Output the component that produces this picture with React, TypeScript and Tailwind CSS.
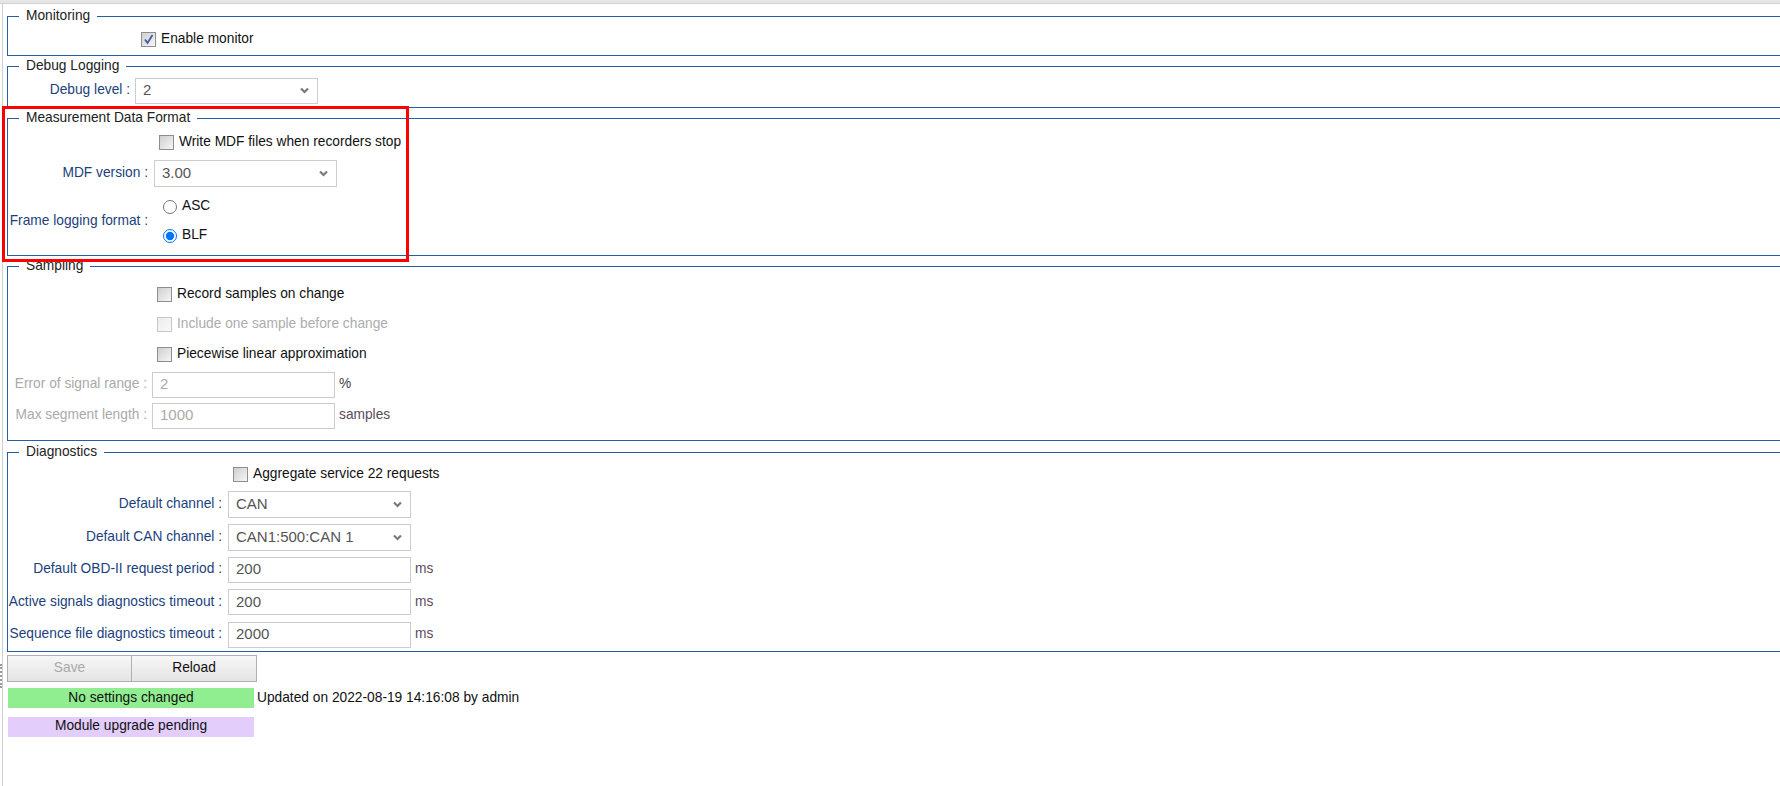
import React from 'react'

const Chevron = () => (
  <svg width="9" height="7" viewBox="0 0 9 7" className="shrink-0">
    <path d="M1 1.5 L4.5 5 L8 1.5" fill="none" stroke="#7a7a7a" strokeWidth="2.2" />
  </svg>
)

const Check = ({ checked = false, disabled = false }: any) => (
  <span
    className={
      'w-[15px] h-[15px] shrink-0 flex items-center justify-center border ' +
      (disabled ? 'border-[#c8c8c8] bg-linear-to-br from-[#ececec] to-[#fafafa]' : 'border-[#8e8e8e] bg-linear-to-br from-[#cfcfcf] to-[#f6f6f6]')
    }
  >
    {checked && (
      <svg width="11" height="11" viewBox="0 0 11 11">
        <path d="M2 5.5 L4.5 9 L9.5 1" fill="none" stroke="#3a5da8" strokeWidth="1.8" />
      </svg>
    )}
  </span>
)

const CheckRow = ({ text, checked, disabled, className }: any) => (
  <div className={'flex items-center gap-[5px] ' + className}>
    <Check checked={checked} disabled={disabled} />
    <span className={'text-[13.75px] ' + (disabled ? 'text-[#adadad]' : 'text-[#111]')}>{text}</span>
  </div>
)

const Select = ({ value, className = '' }: any) => (
  <div className={'w-[183px] h-[26px] flex items-center justify-between border border-[#cccccc] bg-white pl-[7px] pr-[8px] text-[15px] text-[#555] ' + className}>
    <span>{value}</span>
    <Chevron />
  </div>
)

const Input = ({ value, disabled = false }: any) => (
  <div className={'w-[183px] h-[26px] flex items-center border border-[#cccccc] bg-white pl-[7px] text-[15px] ' + (disabled ? 'text-[#aaa]' : 'text-[#555]')}>
    {value}
  </div>
)

const Box = ({ title, className = '', children }: any) => (
  <fieldset className={'border border-[#2160a6] w-[1800px] min-w-0 ' + className}>
    <legend className="ml-[11px] px-[7px] text-[13.75px] leading-[16px] text-[#222]">{title}</legend>
    {children}
  </fieldset>
)

const lbl = 'text-[13.75px] text-[#1b3f7d] text-right whitespace-nowrap'
const unit = 'text-[13.75px] text-[#5b4b5b] ml-[4px]'

export default function App() {
  return (
    <div className="relative w-screen h-screen overflow-hidden bg-white font-['Liberation_Sans',Arial,sans-serif]">
      <div className="h-[4px] bg-[#e6e6e6] border-b border-[#d2d2d2]" />
      <div className="flex h-full">
        <div className="w-[2px] shrink-0" />
        <div className="w-px shrink-0 bg-[#cfcfcf]" />
        <div className="flex-1 min-w-0 pl-[4px]">
          <Box title="Monitoring" className="mt-[4px]">
            <div className="h-[31px] flex items-center pl-[133px]">
              <CheckRow text="Enable monitor" checked />
            </div>
          </Box>

          <Box title="Debug Logging" className="mt-[2px]">
            <div className="h-[33px] flex items-center">
              <div className={lbl + ' w-[127px] pr-[5px]'}>Debug level :</div>
              <Select value="2" />
            </div>
          </Box>

          <Box title="Measurement Data Format" className="mt-[2px]">
            <div className="h-[33px] flex items-center pl-[151px]">
              <CheckRow text="Write MDF files when recorders stop" />
            </div>
            <div className="h-[28px] flex items-center">
              <div className={lbl + ' w-[146px] pr-[6px]'}>MDF version :</div>
              <Select value="3.00" className="h-[27px]" />
            </div>
            <div className="h-[68px] flex items-center">
              <div className={lbl + ' w-[146px] pr-[6px]'}>Frame logging format :</div>
              <div className="flex flex-col py-[5px] pl-[9px]">
                <label className="h-[29px] flex items-center gap-[5px] text-[13.75px] text-[#111]">
                  <input type="radio" name="fmt" className="m-0 w-[14px] h-[14px]" />
                  ASC
                </label>
                <label className="h-[29px] flex items-center gap-[5px] text-[13.75px] text-[#111]">
                  <input type="radio" name="fmt" defaultChecked className="m-0 w-[14px] h-[14px]" />
                  BLF
                </label>
              </div>
            </div>
          </Box>

          <Box title="Sampling" className="mt-[2px]">
            <div className="pt-[5px] pb-[9px]">
              <div className="h-[30px] flex items-center pl-[149px]">
                <CheckRow text="Record samples on change" />
              </div>
              <div className="h-[30px] flex items-center pl-[149px]">
                <CheckRow text="Include one sample before change" disabled />
              </div>
              <div className="h-[30px] flex items-center pl-[149px]">
                <CheckRow text="Piecewise linear approximation" />
              </div>
              <div className="h-[31px] flex items-center">
                <div className={lbl + ' w-[144px] pr-[5px] !text-[#aaa]'}>Error of signal range :</div>
                <Input value="2" disabled />
                <span className="text-[13.75px] text-[#444] ml-[4px]">%</span>
              </div>
              <div className="h-[31px] flex items-center">
                <div className={lbl + ' w-[144px] pr-[5px] !text-[#aaa]'}>Max segment length :</div>
                <Input value="1000" disabled />
                <span className={unit}>samples</span>
              </div>
            </div>
          </Box>

          <Box title="Diagnostics" className="mt-[3px]">
            <div className="h-[28px] flex items-center pl-[225px]">
              <CheckRow text="Aggregate service 22 requests" />
            </div>
            <div className="h-[33px] flex items-center">
              <div className={lbl + ' w-[220px] pr-[6px]'}>Default channel :</div>
              <Select value="CAN" className="h-[27px]" />
            </div>
            <div className="h-[32px] flex items-center">
              <div className={lbl + ' w-[220px] pr-[6px]'}>Default CAN channel :</div>
              <Select value="CAN1:500:CAN 1" className="h-[27px]" />
            </div>
            <div className="h-[33px] flex items-center">
              <div className={lbl + ' w-[220px] pr-[6px]'}>Default OBD-II request period :</div>
              <Input value="200" />
              <span className={unit}>ms</span>
            </div>
            <div className="h-[32px] flex items-center">
              <div className={lbl + ' w-[220px] pr-[6px]'}>Active signals diagnostics timeout :</div>
              <Input value="200" />
              <span className={unit}>ms</span>
            </div>
            <div className="h-[33px] flex items-center">
              <div className={lbl + ' w-[220px] pr-[6px]'}>Sequence file diagnostics timeout :</div>
              <Input value="2000" />
              <span className={unit}>ms</span>
            </div>
          </Box>

          <div className="flex mt-[3px]">
            <button type="button" disabled className="w-[125px] h-[27px] border border-[#b0b0b0] bg-linear-to-b from-[#f7f7f7] to-[#e4e4e4] text-[13.75px] text-[#aaa]">
              Save
            </button>
            <button type="button" className="w-[125px] h-[27px] border border-l-0 border-[#b0b0b0] bg-linear-to-b from-[#f7f7f7] to-[#e4e4e4] text-[13.75px] text-[#111]">
              Reload
            </button>
          </div>

          <div className="flex items-center mt-[6px] ml-[1px]">
            <div className="w-[246px] h-[20px] flex items-center justify-center bg-[#90ee90] text-[13.75px] text-[#111]">No settings changed</div>
            <span className="ml-[3px] text-[13.75px] text-[#111]">Updated on 2022-08-19 14:16:08 by admin</span>
          </div>
          <div className="mt-[8px] ml-[1px] w-[246px] h-[20px] flex items-center justify-center bg-[#e2cdfb] text-[13.75px] text-[#111]">
            Module upgrade pending
          </div>
        </div>
      </div>

      <div className="absolute left-0 top-[664px] h-[24px] w-[2px] border-l-2 border-dotted border-[#9a9a9a]" />
      <div className="absolute left-[2px] top-[106px] w-[407px] h-[156px] border-[3px] border-[#ff0000]" />
    </div>
  )
}
